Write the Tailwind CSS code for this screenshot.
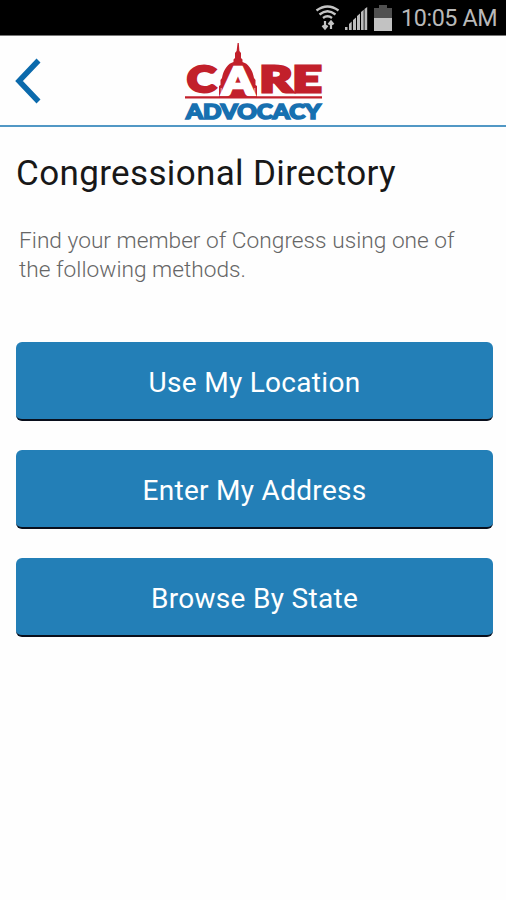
<!DOCTYPE html>
<html lang="en">
<head>
<meta charset="utf-8">
<title>Congressional Directory</title>
<script src="https://cdn.jsdelivr.net/npm/@tailwindcss/browser@4"></script>
</head>
<body class="bg-white">
<div class="w-[506px] h-[900px] overflow-hidden bg-[#fefefe] font-['Roboto',sans-serif]">
  <div class="h-9 border-b border-[#777] bg-black flex items-center justify-end pr-[9px] text-[#b9b9b9]">
    <svg class="w-[25px] h-[27px]" viewBox="0 0 25 27" fill="none" stroke="#c4c4c4" stroke-width="2.300">
      <path d="M1.500 6.500Q12.500-1.500 23.500 6.500M4.500 10.500Q12.500 4 20.500 10.500M8 14Q12.500 10.500 17 14"/>
      <path d="M10 17v7M7.500 21.500L10 24.500l2.500-3M16 25v-7M13.500 20.500L16 17.500l2.500 3" stroke-width="2.200"/>
    </svg>
    <svg class="ml-1 w-6 h-6" viewBox="0 0 24 24" fill="#bcbcbc">
      <path d="M1 21h2.500v3H1zM5 18l2.700-2.500V24H5zM9 14l3-2.500V24H9zM13 10l3-2.500V24h-3zM17 6l2.700-2.200V24H17zM20.500 3l2.700-2v23h-2.700z"/>
    </svg>
    <svg class="ml-1.5 mr-[9px] w-[18px] h-[26px]" viewBox="0 0 18 26">
      <path d="M0 3h5V0h8v3h5v10H0z" fill="#505050"/><path d="M0 13h18v13H0z" fill="#c2c2c2"/>
    </svg>
    <span class="w-[96px] text-[23.300px] tracking-[-0.400px] leading-none whitespace-nowrap pt-[3px]">10:05 AM</span>
  </div>
  <div class="h-[91px] border-b-2 border-[#5198c5] flex items-start">
    <svg class="ml-[14px] mt-[21px] w-7 h-12" viewBox="0 0 28 48" fill="none" stroke="#0b6aac" stroke-width="5.500">
      <path d="M24.500 3.500L5 24l19.500 20.500"/>
    </svg>
    <svg class="ml-[140px] mt-[6px] w-[144px] h-[82px]" viewBox="182 42 144 82">
      <g fill="#c2202b" stroke="#c2202b" stroke-width="2.800" font-family="Lato, sans-serif" font-weight="900" font-size="36.500">
        <text x="187" y="92" textLength="29" lengthAdjust="spacingAndGlyphs">C</text>
        <text x="259.500" y="92" textLength="62" lengthAdjust="spacingAndGlyphs">RE</text>
      </g>
      <path fill="#c2202b" d="M237.600 43h1.200l.6 8 1.600 2v5l1.500 1.500V62l3.500 1.500c5 4 7 9 8 14.500l1.500 2v5l1.500 1v11h-38V86l1.500-1v-5l1.500-2c1-5.500 3-10.500 8-14.500l3.500-1.500v-2.500l1.500-1.500v-5l1.600-2z"/>
      <path d="M221.200 88v8M254.800 88v8" fill="none" stroke="#f2b9bd" stroke-width=".9"/>
      <text x="222" y="94.500" textLength="32" lengthAdjust="spacingAndGlyphs" fill="#fff" stroke="#fff" stroke-width="2.500" font-family="Lato, sans-serif" font-weight="900" font-size="38">A</text>
      <path fill="#c2202b" d="M185 96.200h137v2.300H185z"/>
      <text x="186" y="118.800" textLength="135" lengthAdjust="spacingAndGlyphs" fill="#1770b0" stroke="#1770b0" stroke-width="1.600" font-family="Lato, sans-serif" font-weight="900" font-size="20.200">ADVOCACY</text>
    </svg>
  </div>
  <main class="px-4">
    <h1 class="mt-[25px] h-[44px] text-[35px] leading-[44px] tracking-[0.36px] text-[#181818] whitespace-nowrap"><span>Congressional Directory</span></h1>
    <p class="mt-[30px] ml-[3px] text-[22.700px] leading-[29px] font-light tracking-[0.01px] text-[#666] whitespace-nowrap">Find your member of Congress using one of<br>the following methods.</p>
    <div class="mt-[58px] w-[477px] flex flex-col gap-[29px] text-[28px] tracking-[0.3px] text-white">
      <button class="h-[79px] rounded-md bg-[#237fb7] border-b-2 border-[#090f1c] pt-1"><span>Use My Location</span></button>
      <button class="h-[79px] rounded-md bg-[#237fb7] border-b-2 border-[#090f1c] pt-1"><span>Enter My Address</span></button>
      <button class="h-[79px] rounded-md bg-[#237fb7] border-b-2 border-[#090f1c] pt-1"><span>Browse By State</span></button>
    </div>
  </main>
</div>
</body>
</html>
